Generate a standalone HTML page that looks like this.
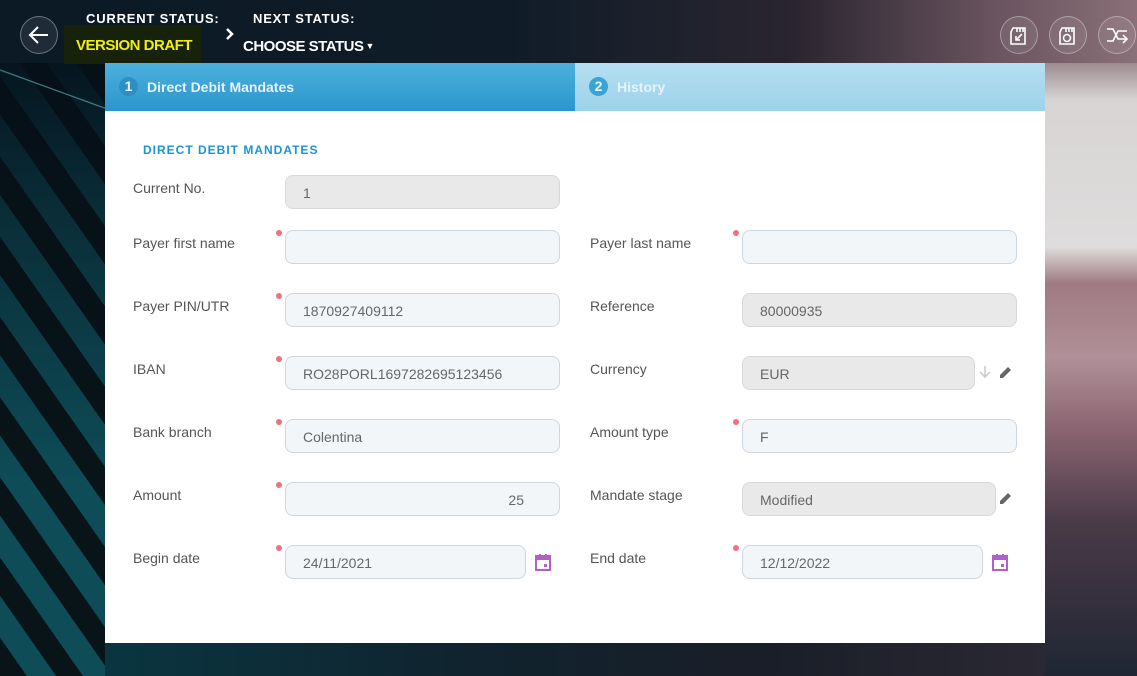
<!DOCTYPE html>
<html><head><meta charset="utf-8"><style>
*{box-sizing:border-box;margin:0;padding:0}
body{width:1137px;height:676px;overflow:hidden;position:relative;font-family:"Liberation Sans",sans-serif;background:#0d1a24}
.abs{position:absolute}
#top{left:0;top:0;width:1137px;height:63px;background:linear-gradient(90deg,#0c1a26 0%,#0f1c28 45%,#2a2530 70%,#6b5560 88%,#8a7078 100%)}
#left{left:0;top:63px;width:105px;height:613px;background:repeating-linear-gradient(55deg,#081418 0 22px,#0e4d58 22px 46px)}
#leftshade{left:0;top:63px;width:105px;height:613px;background:linear-gradient(180deg,rgba(5,15,25,.9) 0%,rgba(5,15,25,.5) 25%,rgba(5,15,25,0) 70%)}
#right{left:1045px;top:63px;width:92px;height:613px;background:linear-gradient(180deg,#9c8a8e 0%,#d8d4d4 6%,#dedcdc 30%,#a07a82 36%,#b09098 48%,#8a6470 60%,#4a3a48 75%,#202634 100%)}
#bottom{left:105px;top:643px;width:940px;height:33px;background:linear-gradient(90deg,#0a3540 0%,#10232e 40%,#1a1e28 70%,#2a2833 100%)}
#panel{left:105px;top:63px;width:940px;height:580px;background:#fff}
.tab1{left:0;top:0;width:470px;height:48px;background:linear-gradient(180deg,#4cb0dc,#2b96cd)}
.tab2{left:470px;top:0;width:470px;height:48px;background:linear-gradient(180deg,#b5def0,#9dd3ea)}
.num{width:19px;height:19px;border-radius:50%;color:#e8f4fa;font-size:14px;text-align:center;line-height:19px;font-weight:bold}
.tabt{font-size:14px;font-weight:bold;color:#e6f2f8}
.lab{font-size:14px;color:#555}
.inp{height:34px;border:1px solid #cfd6dc;border-radius:8px;background:#f3f6f8;font-size:14px;color:#666;padding:0 17px;line-height:34px}
.ro{background:#e9e9e9;border-color:#d8d8d8}
.dot{width:6px;height:6px;border-radius:50%;background:#f07080}
.circ{width:38px;height:38px;border-radius:50%;border:1.5px solid rgba(255,255,255,.35);background:rgba(255,255,255,.08)}
</style></head><body>
<div id="top" class="abs"></div>
<div id="left" class="abs"></div>
<div id="leftshade" class="abs"></div>
<div id="right" class="abs"></div>
<div id="bottom" class="abs"></div>
<svg class="abs" style="left:0;top:60px" width="110" height="60"><line x1="0" y1="10" x2="110" y2="50" stroke="#5aa8a8" stroke-width="1.2" opacity=".7"/></svg>

<div class="abs circ" style="left:20px;top:16px"></div>
<svg class="abs" style="left:20px;top:16px" width="38" height="38"><path d="M28 19H11M18 11l-8 8 8 8" stroke="#fff" stroke-width="2" fill="none"/></svg>
<div class="abs" style="left:86px;top:11px;color:#fff;font-size:13px;font-weight:bold;letter-spacing:.8px">CURRENT STATUS:</div>
<div class="abs" style="left:64px;top:25px;width:137px;height:39px;background:#16220a"></div>
<div class="abs" style="left:76px;top:37px;color:#f2ee10;font-size:15px;font-weight:bold;letter-spacing:-.5px">VERSION DRAFT</div>
<svg class="abs" style="left:225px;top:28px" width="10" height="12"><path d="M2 1l5 5-5 5" stroke="#fff" stroke-width="2.5" fill="none"/></svg>
<div class="abs" style="left:253px;top:11px;color:#fff;font-size:13px;font-weight:bold;letter-spacing:.8px">NEXT STATUS:</div>
<div class="abs" style="left:243px;top:38px;color:#fff;font-size:15px;font-weight:bold;letter-spacing:-.5px">CHOOSE STATUS<span style="font-size:9px;vertical-align:2px"> ▼</span></div>

<div class="abs circ" style="left:1000px;top:16px"></div>
<div class="abs circ" style="left:1049px;top:16px"></div>
<div class="abs circ" style="left:1098px;top:16px"></div>
<svg class="abs" style="left:1000px;top:16px" width="38" height="38" fill="none" stroke="#fff" stroke-width="1.6"><path d="M13 12h12v16H11V16z M20 12v4M23 12v4M17 12v4M22 18l-6 6M16 20v4h4"/></svg>
<svg class="abs" style="left:1049px;top:16px" width="38" height="38" fill="none" stroke="#fff" stroke-width="1.6"><path d="M13 12h12v16H11V16z M20 12v4M23 12v4M17 12v4"/><circle cx="18" cy="22" r="3.5"/></svg>
<svg class="abs" style="left:1098px;top:16px" width="38" height="38" fill="none" stroke="#fff" stroke-width="1.6"><path d="M9 13h6l5 10h9M9 25h6l5-10h9M25 19l4 4-4 4"/></svg>

<div id="panel" class="abs">
<div class="abs tab1"></div>
<div class="abs tab2"></div>
<div class="abs num" style="left:14px;top:14px;background:#2d8fc4">1</div>
<div class="abs tabt" style="left:42px;top:16px">Direct Debit Mandates</div>
<div class="abs num" style="left:484px;top:14px;background:#3aa4d6">2</div>
<div class="abs tabt" style="left:512px;top:16px">History</div>
<div class="abs" style="left:38px;top:80px;color:#1b94d6;font-size:12px;font-weight:bold;letter-spacing:1px">DIRECT DEBIT MANDATES</div>

<div class="abs lab" style="left:28px;top:117px">Current No.</div>
<div class="abs inp ro" style="left:180px;top:112px;width:275px">1</div>

<div class="abs lab" style="left:28px;top:172px">Payer first name</div>
<div class="abs dot" style="left:171px;top:167px"></div>
<div class="abs inp" style="left:180px;top:167px;width:275px"></div>
<div class="abs lab" style="left:485px;top:172px">Payer last name</div>
<div class="abs dot" style="left:628px;top:167px"></div>
<div class="abs inp" style="left:637px;top:167px;width:275px"></div>

<div class="abs lab" style="left:28px;top:235px">Payer PIN/UTR</div>
<div class="abs dot" style="left:171px;top:230px"></div>
<div class="abs inp" style="left:180px;top:230px;width:275px">1870927409112</div>
<div class="abs lab" style="left:485px;top:235px">Reference</div>
<div class="abs inp ro" style="left:637px;top:230px;width:275px">80000935</div>

<div class="abs lab" style="left:28px;top:298px">IBAN</div>
<div class="abs dot" style="left:171px;top:293px"></div>
<div class="abs inp" style="left:180px;top:293px;width:275px">RO28PORL1697282695123456</div>
<div class="abs lab" style="left:485px;top:298px">Currency</div>
<div class="abs inp ro" style="left:637px;top:293px;width:233px">EUR</div>
<svg class="abs" style="left:873px;top:301px" width="14" height="16"><path d="M7 2v11M2 8l5 5 5-5" stroke="#ccc" stroke-width="1.6" fill="none"/></svg>
<svg class="abs" style="left:893px;top:301px" width="16" height="16"><path d="M2 14v-3l8-8 3 3-8 8z" fill="#666"/></svg>

<div class="abs lab" style="left:28px;top:361px">Bank branch</div>
<div class="abs dot" style="left:171px;top:356px"></div>
<div class="abs inp" style="left:180px;top:356px;width:275px">Colentina</div>
<div class="abs lab" style="left:485px;top:361px">Amount type</div>
<div class="abs dot" style="left:628px;top:356px"></div>
<div class="abs inp" style="left:637px;top:356px;width:275px">F</div>

<div class="abs lab" style="left:28px;top:424px">Amount</div>
<div class="abs dot" style="left:171px;top:419px"></div>
<div class="abs inp" style="left:180px;top:419px;width:275px;text-align:right;padding-right:35px">25</div>
<div class="abs lab" style="left:485px;top:424px">Mandate stage</div>
<div class="abs inp ro" style="left:637px;top:419px;width:254px">Modified</div>
<svg class="abs" style="left:893px;top:427px" width="16" height="16"><path d="M2 14v-3l8-8 3 3-8 8z" fill="#666"/></svg>

<div class="abs lab" style="left:28px;top:487px">Begin date</div>
<div class="abs dot" style="left:171px;top:482px"></div>
<div class="abs inp" style="left:180px;top:482px;width:241px">24/11/2021</div>
<svg class="abs" style="left:429px;top:489px" width="18" height="20"><rect x="2" y="4" width="14" height="14" fill="none" stroke="#b45ec8" stroke-width="2"/><rect x="2" y="4" width="14" height="4" fill="#b45ec8"/><rect x="5" y="2" width="2" height="3" fill="#b45ec8"/><rect x="11" y="2" width="2" height="3" fill="#b45ec8"/><rect x="10" y="12" width="3" height="3" fill="#b45ec8"/></svg>
<div class="abs lab" style="left:485px;top:487px">End date</div>
<div class="abs dot" style="left:628px;top:482px"></div>
<div class="abs inp" style="left:637px;top:482px;width:241px">12/12/2022</div>
<svg class="abs" style="left:886px;top:489px" width="18" height="20"><rect x="2" y="4" width="14" height="14" fill="none" stroke="#b45ec8" stroke-width="2"/><rect x="2" y="4" width="14" height="4" fill="#b45ec8"/><rect x="5" y="2" width="2" height="3" fill="#b45ec8"/><rect x="11" y="2" width="2" height="3" fill="#b45ec8"/><rect x="10" y="12" width="3" height="3" fill="#b45ec8"/></svg>
</div>
</body></html>
